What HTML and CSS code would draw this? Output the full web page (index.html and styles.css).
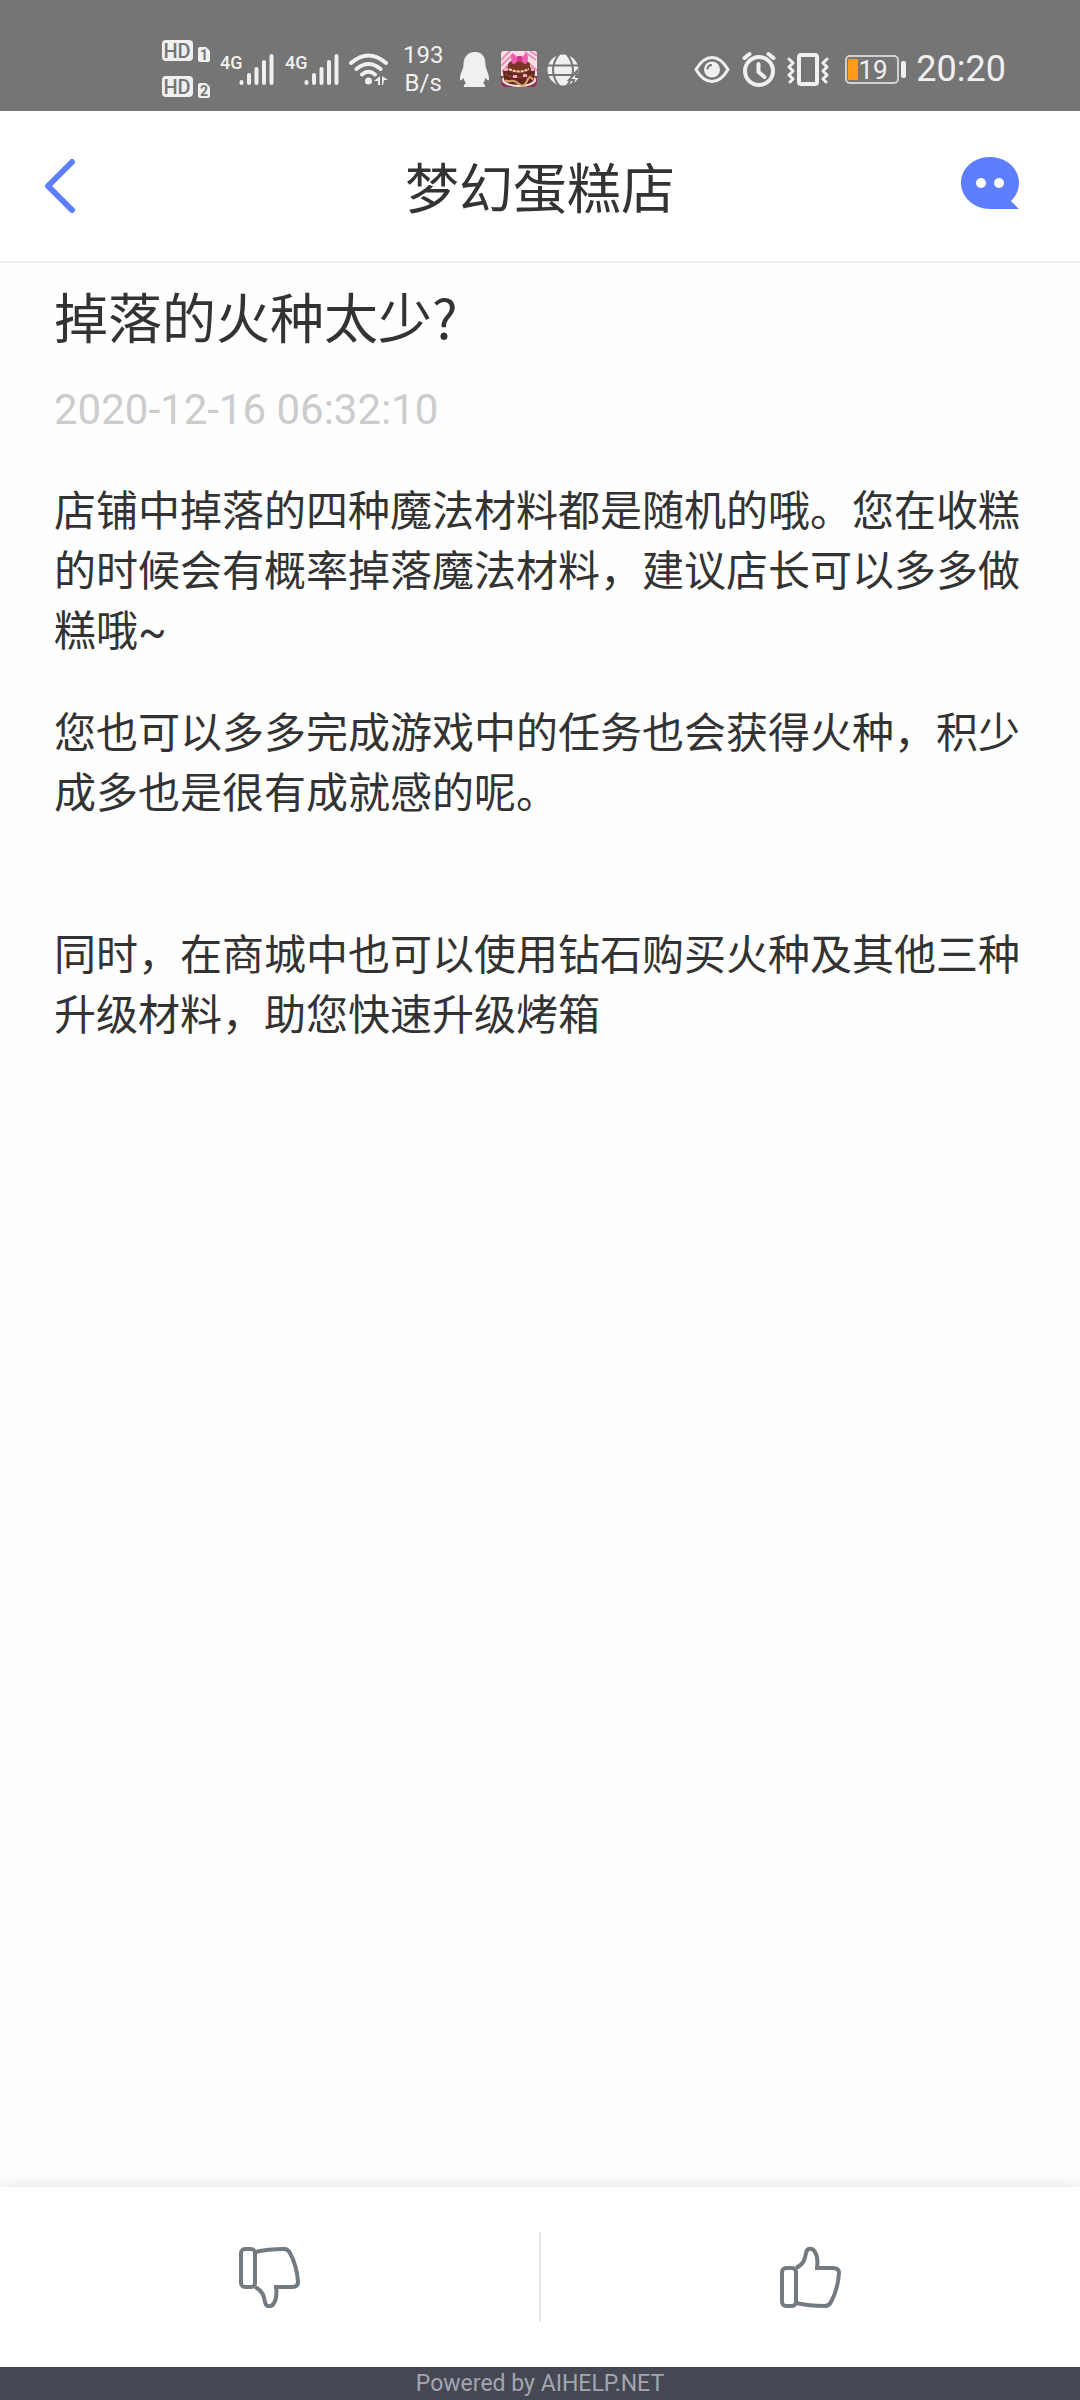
FILE: index.html
```html
<!DOCTYPE html>
<html lang="zh-CN">
<head>
    <meta charset="UTF-8">
    <meta name="viewport" content="width=device-width, initial-scale=1.0">
    <title>梦幻蛋糕店</title>
    <link rel="stylesheet" href="styles.css">
</head>
<body>
    <div class="status-bar">
        <div class="status-group">
            <svg class="icon" width="49" height="60" viewBox="0 0 49 60">
                <rect x="0" y="1" width="31" height="21" rx="4"/>
                <text class="hd" x="15" y="19" text-anchor="middle">HD</text>
                <path d="M36 10q0-2 2-2h6l4 4v9q0 2-2 2h-8q-2 0-2-2z"/>
                <text class="sim" x="42" y="21" text-anchor="middle">1</text>
                <rect x="0" y="37" width="31" height="21" rx="4"/>
                <text class="hd" x="15" y="55" text-anchor="middle">HD</text>
                <path d="M36 46q0-2 2-2h6l4 4v9q0 2-2 2h-8q-2 0-2-2z"/>
                <text class="sim" x="42" y="57" text-anchor="middle">2</text>
            </svg>
            <svg class="icon" width="57" height="36" viewBox="0 0 57 36">
                <text class="net" x="1" y="18">4G</text>
                <path class="bars" d="M22.500 31v1M30 24v8M37.500 18v14M45 11v21M52.500 5v27"/>
            </svg>
            <svg class="icon" width="57" height="36" viewBox="0 0 57 36">
                <text class="net" x="1" y="18">4G</text>
                <path class="bars" d="M22.500 31v1M30 24v8M37.500 18v14M45 11v21M52.500 5v27"/>
            </svg>
            <svg class="icon" width="46" height="36" viewBox="0 0 46 36">
                <path class="line" d="M2 12Q19.500-3 37 12M7.500 18Q19.500 8 31.500 18M13 23.500Q19.500 18 26 23.500"/>
                <circle cx="19.500" cy="30" r="3.500"/>
                <path d="M31 25v9h-2v-4h-4zM33 25l6 4h-4l-1 5h-1z"/>
            </svg>
            <div class="speed">193<br>B/s</div>
            <svg class="icon" width="42" height="36" viewBox="0 0 42 36">
                <path d="M24 1C16 1 12.500 7 12.500 14c0 4-3.500 8-3.500 14 0 2 1 2 3.500-1 .5 2 1.500 4 2.500 5.500-2 .5-2.500 2-2 3.500h21c.5-1.500 0-3-2-3.500 1-1.500 2-3.500 2.500-5.500 2.500 3 3.500 3 3.500 1 0-6-3.500-10-3.500-14C34.500 7 32 1 24 1z"/>
            </svg>
            <svg width="36" height="36" viewBox="0 0 36 36">
                <rect width="36" height="36" rx="3" fill="#fbe0ea"/>
                <path d="M0 9L9 0M0 15L12 3M24 1l11 8M29 0l7 5M1 21l7-8M28 12l8 8" stroke="#e990b6" stroke-width="2"/>
                <path d="M0 25h36v8q0 3-3 3H3q-3 0-3-3z" fill="#8d3356"/>
                <ellipse cx="18" cy="29" rx="17" ry="7" fill="#f8e9df"/>
                <path d="M2 21q0-6 16-6t16 6l-1 8q-3 5-15 5T3 29z" fill="#63281f"/>
                <path d="M7 14q0-5 11-5t11 5v5q-3 4-11 4T7 19z" fill="#7b3428"/>
                <path d="M8 18q10 5 20 0" fill="none" stroke="#f4dcae" stroke-width="2" stroke-dasharray="3 1"/>
                <path d="M4 29q3 2 6 1t8 3 8-3 6-1" fill="none" stroke="#d9a06c" stroke-width="2"/>
                <path d="M4 23q4 3 14 3t14-3" fill="none" stroke="#9b513e"/>
                <path d="M3 17h4v3H3zM12 24h4v3h-4zM22 23h4v3h-4zM30 17h3v3h-3z" fill="#f7a8b8"/>
                <path d="M17 7L12 2q-2 1-2 5t2 6q3 0 5-4zM20 7l5-5q2 1 2 5t-2 6q-3 0-5-4z" fill="#f05fae"/>
                <rect x="16" y="5" width="5" height="6" rx="1" fill="#c93a83"/>
            </svg>
            <svg class="icon" width="38" height="36" viewBox="0 0 38 36">
                <circle cx="18" cy="19" r="15.500"/>
                <path class="cut" d="M15 2Q1 19 15 36M21 2Q35 19 21 36M0 14.500h36M0 24h36"/>
                <path class="bolt" d="M32 20l-8 9h5l-2 7 9-10h-5z"/>
            </svg>
        </div>
        <div class="status-group">
            <svg class="icon" width="40" height="36" viewBox="0 0 40 36">
                <path class="thin" d="M2 18.500Q9 6.500 18 6.500t16 12Q27 30.500 18 30.500T2 18.500z"/>
                <circle cx="18" cy="18.500" r="8"/>
                <path class="cut" d="M13.500 18.500q0-4.500 4.500-4.500"/>
            </svg>
            <svg class="icon" width="37" height="36" viewBox="0 0 37 36">
                <circle class="line" cx="17" cy="20" r="14"/>
                <path class="line" d="M16.500 13v8l6 5M2.500 7l5-4M31.500 7l-5-4"/>
            </svg>
            <svg class="icon" width="50" height="36" viewBox="0 0 50 36">
                <rect class="line" x="12" y="4" width="18" height="29" rx="2"/>
                <path class="thin" d="M2 8l4 4-4 4 4 4-4 4 4 4-3 3M40 8l-4 4 4 4-4 4 4 4-4 4 3 3"/>
            </svg>
            <svg class="icon" width="63" height="36" viewBox="0 0 63 36">
                <rect class="case" x="1" y="5" width="52" height="27" rx="4"/>
                <rect class="charge" x="3" y="8" width="10" height="21" rx="1"/>
                <text class="level" x="28" y="28" text-anchor="middle">19</text>
                <rect x="56" y="10" width="5" height="17" rx="2"/>
            </svg>
            <div class="clock">20:20</div>
        </div>
    </div>

    <header class="header">
        <button class="back" aria-label="返回">
            <svg width="32" height="56" viewBox="0 0 32 56">
                <path d="M28 4L4 28l24 24" fill="none" stroke="#5c7eff" stroke-width="6" stroke-linecap="round" stroke-linejoin="round"/>
            </svg>
        </button>
        <h1>梦幻蛋糕店</h1>
        <button class="chat" aria-label="客服">
            <svg width="60" height="60" viewBox="0 0 60 60">
                <path d="M30 1C14 1 1 12 1 27c0 14 13 26 29 26h29l-8-8c5-5 8-11 8-18C59 12 46 1 30 1z" fill="#5c7eff"/>
                <circle cx="21" cy="27" r="5" fill="#fff"/>
                <circle cx="39" cy="27" r="5" fill="#fff"/>
            </svg>
        </button>
    </header>

    <main class="article">
        <h2>掉落的火种太少?</h2>
        <time datetime="2020-12-16T06:32:10">2020-12-16 06:32:10</time>
        <div class="content">
            <p>店铺中掉落的四种魔法材料都是随机的哦。您在收糕的时候会有概率掉落魔法材料，建议店长可以多多做糕哦~</p>
            <p>您也可以多多完成游戏中的任务也会获得火种，积少成多也是很有成就感的呢。<br><br></p>
            <p>同时，在商城中也可以使用钻石购买火种及其他三种升级材料，助您快速升级烤箱</p>
        </div>
    </main>

    <div class="vote">
        <button aria-label="没有帮助">
            <svg class="thumb" width="62" height="62" viewBox="0 0 62 62">
                <rect x="2" y="3" width="14" height="38" rx="4"/>
                <path d="M16 6Q29 3 45 3q4 0 6 4 7 13 8 29 0 5-6 5H35M16 41c8 4 9 9 10 15 1 6 7 5 9 1 3-5 3-9 2-16"/>
            </svg>
        </button>
        <button aria-label="有帮助">
            <svg class="thumb" width="62" height="62" viewBox="0 0 62 62">
                <rect x="2" y="22" width="14" height="38" rx="4"/>
                <path d="M16 57Q29 60 45 60q4 0 6-4 7-13 8-29 0-5-6-5H35M16 22c8-4 9-9 10-15 1-6 7-5 9-1 3 5 3 9 2 16"/>
            </svg>
        </button>
    </div>
    <footer class="powered">Powered by AIHELP.NET</footer>
</body>
</html>
```
FILE: styles.css
```css
* {
    box-sizing: border-box;
}
body {
    margin: 0;
    min-height: 100vh;
    display: flex;
    flex-direction: column;
    background: #fefefe;
    color: #333;
    font-family: Roboto, "Noto Sans CJK SC", sans-serif;
}
h1, h2, p {
    margin: 0;
    font-weight: normal;
}
h1, h2 {
    font-family: "Noto Sans CJK SC", sans-serif;
    font-size: 54px;
    line-height: 80px;
}
button {
    padding: 0;
    border: none;
    background: none;
    cursor: pointer;
}
svg {
    display: block;
}

/* status bar */
.status-bar {
    display: flex;
    justify-content: space-between;
    align-items: center;
    height: 111px;
    padding: 26px 74px 0 162px;
    background: #757575;
    color: #f0f0f0;
}
.status-group {
    display: flex;
    align-items: center;
    gap: 8px;
}
.icon {
    fill: #f0f0f0;
}
.icon .line,
.icon .thin,
.icon .bars {
    fill: none;
    stroke: #f0f0f0;
    stroke-width: 4;
    stroke-linecap: round;
    stroke-linejoin: round;
}
.icon .thin {
    stroke-width: 3;
}
.icon .cut {
    fill: none;
    stroke: #757575;
    stroke-width: 2;
}
.icon .bolt {
    stroke: #757575;
    stroke-width: 2;
}
.icon .case {
    fill: none;
    stroke: #d2d0d4;
    stroke-width: 2;
}
.icon .charge {
    fill: #ff9c1a;
}
.hd {
    fill: #757575;
    font-size: 20px;
    font-weight: 500;
}
.sim {
    fill: #757575;
    font-size: 14px;
    font-weight: bold;
}
.net {
    font-size: 18px;
    font-weight: 500;
}
.level {
    font-size: 26px;
}
.speed {
    font-size: 24px;
    line-height: 28px;
    text-align: center;
}
.clock {
    font-size: 36px;
}

/* title bar */
.header {
    display: grid;
    grid-template-columns: 76px 1fr 60px;
    align-items: center;
    height: 152px;
    padding: 0 60px 0 44px;
    background: #fff;
    border-bottom: 2px solid #f0f0f0;
}
.header h1 {
    text-align: center;
}

/* article */
.article {
    flex: 1;
    padding: 13px 54px;
}
.article time {
    display: block;
    margin-top: 24px;
    color: #ccc;
    font-size: 42px;
    line-height: 60px;
}
.content {
    margin-top: 42px;
    font-size: 42px;
    line-height: 60px;
}
.content p {
    margin-bottom: 42px;
}

/* vote buttons */
.vote {
    display: flex;
    height: 180px;
    padding: 45px 0;
    background: #fff;
    box-shadow: 0 0 16px rgba(0, 0, 0, 0.12);
}
.vote button {
    flex: 1;
    display: flex;
    justify-content: center;
    align-items: center;
}
.vote button + button {
    border-left: 2px solid #e6e6e6;
}
.thumb {
    fill: none;
    stroke: #747a80;
    stroke-width: 4;
    stroke-linejoin: round;
}
.powered {
    height: 33px;
    background: #454852;
    color: #a3a6b0;
    font-size: 23px;
    line-height: 34px;
    text-align: center;
}
```
